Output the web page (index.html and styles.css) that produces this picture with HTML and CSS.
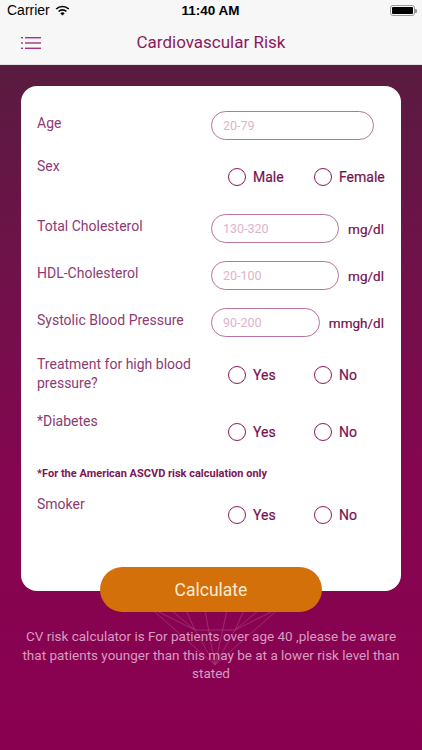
FILE: index.html
```html
<!DOCTYPE html>
<html lang="en">
<head>
  <meta charset="UTF-8" />
  <meta name="viewport" content="width=device-width, initial-scale=1.0"/>
  <title>Cardiovascular Risk</title>
  <link rel="stylesheet" href="styles.css">
</head>
<body>
  <div class="status-bar">
    <div class="carrier">
      Carrier
      <svg class="wifi" width="15" height="11" viewBox="0 0 15 11">
        <path d="M7.5 10.5 L5.3 8.2 A3.2 3.2 0 0 1 9.7 8.2 Z" fill="#000"/>
        <path d="M3.6 6.5 A5.6 5.6 0 0 1 11.4 6.5" stroke="#000" stroke-width="1.6" fill="none"/>
        <path d="M1.2 4 A9 9 0 0 1 13.8 4" stroke="#000" stroke-width="1.6" fill="none"/>
      </svg>
    </div>
    <div class="clock">11:40 AM</div>
    <div class="battery"><span class="battery-level"></span></div>
  </div>

  <header class="nav-bar">
    <svg class="menu-icon" width="20" height="12" viewBox="0 0 20 12">
      <rect x="0" y="0" width="2" height="1.4" fill="#a3357e"/>
      <rect x="4" y="0" width="16" height="1.4" fill="#a3357e"/>
      <rect x="0" y="5.3" width="2" height="1.4" fill="#a3357e"/>
      <rect x="4" y="5.3" width="16" height="1.4" fill="#a3357e"/>
      <rect x="0" y="10.6" width="2" height="1.4" fill="#a3357e"/>
      <rect x="4" y="10.6" width="16" height="1.4" fill="#a3357e"/>
    </svg>
    <h1>Cardiovascular Risk</h1>
  </header>

  <main class="content">
    <svg class="mesh" width="160" height="70" viewBox="0 0 160 70">
      <g stroke="#c46aa0" stroke-width="0.7" fill="none" opacity="0.55">
        <path d="M10 5 L60 30 L80 65 L100 30 L150 5"/>
        <path d="M30 5 L60 30 L100 30 L130 5"/>
        <path d="M60 30 L50 8 M100 30 L110 8 M80 65 L70 10 M80 65 L92 10"/>
        <path d="M20 12 L80 65 L140 12"/>
      </g>
    </svg>

    <form class="risk-card">
      <div class="row row-age">
        <label class="field-label">Age</label>
        <div class="control">
          <input class="pill age-input" type="text" placeholder="20-79" />
        </div>
      </div>

      <div class="row row-sex radio-row">
        <label class="field-label">Sex</label>
        <div class="choices">
          <label class="choice"><span class="radio"></span>Male</label>
          <label class="choice"><span class="radio"></span>Female</label>
        </div>
      </div>

      <div class="row row-tc">
        <label class="field-label">Total Cholesterol</label>
        <div class="control">
          <input class="pill" type="text" placeholder="130-320" />
          <span class="unit">mg/dl</span>
        </div>
      </div>

      <div class="row row-hdl">
        <label class="field-label">HDL-Cholesterol</label>
        <div class="control">
          <input class="pill" type="text" placeholder="20-100" />
          <span class="unit">mg/dl</span>
        </div>
      </div>

      <div class="row row-sbp">
        <label class="field-label">Systolic Blood Pressure</label>
        <div class="control">
          <input class="pill" type="text" placeholder="90-200" />
          <span class="unit">mmgh/dl</span>
        </div>
      </div>

      <div class="row row-treat radio-row">
        <label class="field-label">Treatment for high blood pressure?</label>
        <div class="choices">
          <label class="choice"><span class="radio"></span>Yes</label>
          <label class="choice"><span class="radio"></span>No</label>
        </div>
      </div>

      <div class="row row-diab radio-row">
        <label class="field-label">*Diabetes</label>
        <div class="choices">
          <label class="choice"><span class="radio"></span>Yes</label>
          <label class="choice"><span class="radio"></span>No</label>
        </div>
      </div>

      <p class="note">*For the American ASCVD risk calculation only</p>

      <div class="row row-smoker radio-row">
        <label class="field-label">Smoker</label>
        <div class="choices">
          <label class="choice"><span class="radio"></span>Yes</label>
          <label class="choice"><span class="radio"></span>No</label>
        </div>
      </div>
    </form>

    <button class="calc-btn" type="button">Calculate</button>

    <p class="disclaimer">CV risk calculator is For patients over age 40 ,please be aware that patients younger than this may be at a lower risk level than stated</p>
  </main>
</body>
</html>
```

FILE: styles.css
```css
* { box-sizing: border-box; }
body { margin: 0; width: 422px; height: 750px; overflow: hidden; font-family: Roboto, "Noto Sans", sans-serif; background: #8a0050; }

.status-bar { height: 20px; background: #f7f7f7; display: flex; align-items: center; justify-content: space-between; padding: 0 6px 0 7px; font-family: "Liberation Sans", Roboto, sans-serif; font-size: 14px; color: #000; }
.carrier { display: flex; align-items: center; gap: 5px; width: 120px; }
.clock { font-weight: bold; font-size: 13.5px; }
.battery { width: 25px; height: 11px; border: 1px solid #9a9a9a; border-radius: 3px; padding: 1px; position: relative; margin-left: 96px; margin-right: 1px; }
.battery::after { content: ""; position: absolute; right: -3px; top: 3px; width: 2px; height: 4px; background: #9a9a9a; border-radius: 0 1px 1px 0; }
.battery-level { display: block; height: 100%; background: #000; border-radius: 1px; }

.nav-bar { height: 45px; background: #f7f7f7; display: flex; align-items: center; justify-content: center; position: relative; border-bottom: 1px solid #e4dfe2; }
.menu-icon { position: absolute; left: 21px; top: 17px; }
.nav-bar h1 { margin: 0; font-size: 17px; font-weight: normal; color: #8b1a5c; }

.content { position: relative; height: 685px; padding: 21px 21px 0; background: linear-gradient(to bottom, #5a1b40 0%, #6e1249 28%, #840650 60%, #8a0050 100%); }
.mesh { position: absolute; left: 135px; top: 535px; }

.risk-card { position: relative; background: #fff; border-radius: 16px; padding: 25px 17px 66px 16px; }
.row { display: flex; align-items: flex-start; }
.field-label { width: 174px; flex-shrink: 0; font-size: 14px; line-height: 19px; color: #8e3a72; padding-top: 3px; padding-right: 10px; }
.radio-row .field-label { padding-top: 0; }
.control { flex: 1; min-width: 0; display: flex; align-items: center; justify-content: space-between; }
.pill { width: 128px; height: 29px; border: 1px solid #b8739e; border-radius: 15px; padding: 0 11px; font-family: Roboto, sans-serif; font-size: 12.5px; color: #8b1a5c; background: #fff; outline: none; }
.pill::placeholder { color: #e0b3cc; }
.age-input { width: 163px; }
.row-sbp .pill { width: 109px; }
.unit { font-size: 13.5px; color: #771050; -webkit-text-stroke: 0.2px #771050; }

.choices { display: flex; padding-left: 17px; margin-top: 10px; }
.choice { width: 86px; display: flex; align-items: center; gap: 7px; font-size: 14px; color: #771050; line-height: 20px; -webkit-text-stroke: 0.2px #771050; }
.radio { width: 18px; height: 18px; border: 1.5px solid #8b1a5c; border-radius: 50%; flex-shrink: 0; }

.row-sex { margin-top: 17px; }
.row-tc { margin-top: 27px; }
.row-hdl { margin-top: 18px; }
.row-sbp { margin-top: 18px; }
.row-treat { margin-top: 18px; }
.row-diab { margin-top: 19px; }
.row-smoker { margin-top: 14px; }

.note { margin: 25px 0 0; font-size: 11px; line-height: 14px; font-weight: bold; color: #7d1553; }

.calc-btn { position: relative; display: block; margin: -24px auto 0; width: 222px; height: 45px; border: none; border-radius: 23px; background: #d4700a; color: #fbecd4; font-family: Roboto, sans-serif; font-size: 17.5px; }

.disclaimer { position: relative; margin: 15px -4px 0; text-align: center; font-size: 13.5px; line-height: 18.5px; color: #d79cc0; }
```
